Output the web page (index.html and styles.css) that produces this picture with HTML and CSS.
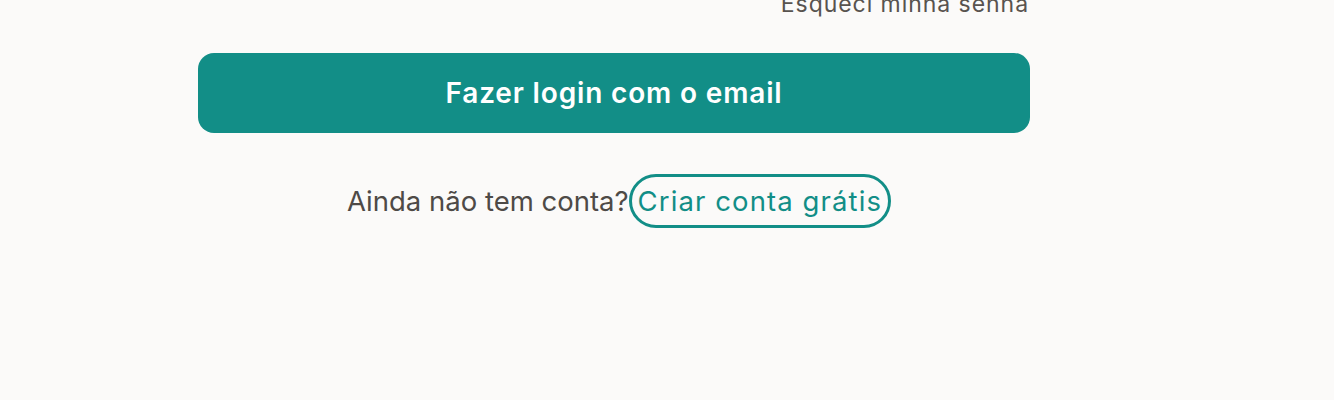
FILE: index.html
```html
<!DOCTYPE html>
<html>
<head>
    <title>Login</title>
    <link rel="stylesheet" href="styles.css">
</head>
<body>
    <div class="panel">
        <div class="forgot-row">
            <a href="#" class="forgot">Esqueci minha senha</a>
        </div>
        <button class="login-btn">Fazer login com o email</button>
        <div class="signup">
            <span>Ainda não tem conta?</span><a href="#" class="signup-link">Criar conta grátis</a>
        </div>
    </div>
</body>
</html>
```

FILE: styles.css
```css
:root {
    --teal: #128e87;
    --bg: #fbfaf9;
    --text: #4e4a47;
}

body {
    margin: 0;
    background: var(--bg);
    font-family: Inter, 'Noto Sans', sans-serif;
    color: var(--text);
}

.panel {
    width: 832px;
    margin-left: 198px;
    margin-top: -12px;
}

.forgot-row {
    display: flex;
    justify-content: flex-end;
}

.forgot {
    font-size: 23px;
    letter-spacing: 0.95px;
    line-height: 32px;
    color: #58534f;
    text-decoration: none;
    padding-right: 1px;
}

.login-btn {
    display: block;
    width: 100%;
    height: 80px;
    margin-top: 33px;
    border: none;
    border-radius: 16px;
    background: var(--teal);
    color: #fff;
    font-family: inherit;
    font-size: 28px;
    font-weight: 600;
    letter-spacing: 0.03em;
    cursor: pointer;
}

.signup {
    display: flex;
    justify-content: center;
    align-items: center;
    margin-top: 41px;
    font-size: 27.5px;
    padding-left: 10px;
}

.signup-link {
    color: var(--teal);
    text-decoration: none;
    padding: 9px 6px;
    border: 3px solid var(--teal);
    border-radius: 30px;
    line-height: 30px;
    letter-spacing: 1.1px;
}
```
